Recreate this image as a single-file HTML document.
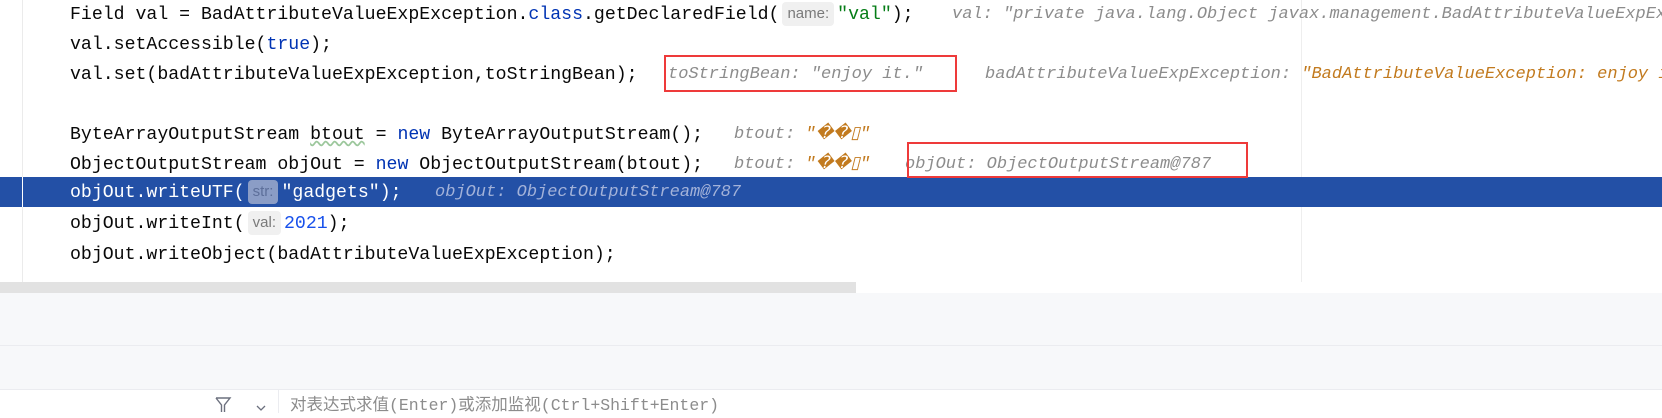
<!DOCTYPE html>
<html><head><meta charset="utf-8"><style>
*{margin:0;padding:0;box-sizing:border-box}
body{width:1662px;height:413px;overflow:hidden;background:#fff;position:relative;font-family:"Liberation Mono",monospace;font-size:18.2px;color:#080808}
.l{position:absolute;left:0;height:30px;line-height:30px;white-space:pre;width:1662px;overflow:hidden}
.c{position:absolute;left:70px;top:1px}
.k{color:#0033b3}.s{color:#067d17}.n{color:#1750eb}
.h{position:absolute;top:1px;font-style:italic;color:#8c8c8c;font-size:17px}
.o{color:#c27a1e}
.p{display:inline-block;background:#f0f0f0;color:#7a7a7a;font-family:"Liberation Sans",sans-serif;font-size:15px;line-height:24px;height:24px;padding:0 5px;border-radius:4px;margin:0 3px;vertical-align:1px}
.sel{background:#2350a6;color:#fff}
.sel .p{background:#8b9dc6;color:#5d6f9a}
.sel .h{color:#a3b2d9}
.box{position:absolute;border:2px solid #ee3a3a}
</style></head><body>
<div style="position:absolute;left:22px;top:0;width:1px;height:282px;background:#ebebeb"></div>
<div style="position:absolute;left:1301px;top:0;width:1px;height:282px;background:#eeeeee"></div>

<div class="l" style="top:-1px"><span class="c">Field val = BadAttributeValueExpException.<span class="k">class</span>.getDeclaredField(<span class="p">name:</span><span class="s">"val"</span>);</span><span class="h" style="left:952px">val: "private java.lang.Object javax.management.BadAttributeValueExpException.val"</span></div>
<div class="l" style="top:29px"><span class="c">val.setAccessible(<span class="k">true</span>);</span></div>
<div class="l" style="top:59px"><span class="c">val.set(badAttributeValueExpException,toStringBean);</span><span class="h" style="left:668px">toStringBean: "enjoy it."</span><span class="h" style="left:985px">badAttributeValueExpException: <span class="o">"BadAttributeValueException: enjoy it."</span></span></div>
<div class="l" style="top:119px"><span class="c">ByteArrayOutputStream <span style="text-decoration:underline wavy #9cc79c">btout</span> = <span class="k">new</span> ByteArrayOutputStream();</span><span class="h" style="left:734px">btout: <span class="o">"��&#9647;"</span></span></div>
<div class="l" style="top:149px"><span class="c">ObjectOutputStream objOut = <span class="k">new</span> ObjectOutputStream(btout);</span><span class="h" style="left:734px">btout: <span class="o">"��&#9647;"</span></span><span class="h" style="left:905px">objOut: ObjectOutputStream@787</span></div>
<div class="l sel" style="top:177px"><span class="c">objOut.writeUTF(<span class="p">str:</span>"gadgets");</span><span class="h" style="left:435px">objOut: ObjectOutputStream@787</span></div>
<div style="position:absolute;left:22px;top:177px;width:1px;height:30px;background:#fff"></div>
<div class="l" style="top:208px"><span class="c">objOut.writeInt(<span class="p">val:</span><span class="n">2021</span>);</span></div>
<div class="l" style="top:239px"><span class="c">objOut.writeObject(badAttributeValueExpException);</span></div>

<div class="box" style="left:664px;top:55px;width:293px;height:37px"></div>
<div class="box" style="left:907px;top:142px;width:341px;height:36px"></div>

<div style="position:absolute;left:0;top:282px;width:856px;height:11px;background:#e2e2e2"></div>
<div style="position:absolute;left:0;top:293px;width:1662px;height:96px;background:#f7f8fa"></div>
<div style="position:absolute;left:0;top:345px;width:1662px;height:1px;background:#ebecf0"></div>
<div style="position:absolute;left:0;top:389px;width:1662px;height:1px;background:#ebecf0"></div>
<svg style="position:absolute;left:214px;top:397px" width="18" height="16" viewBox="0 0 18 16"><path d="M2 1H16L10.5 8V15M2 1L7.5 8V15" fill="none" stroke="#6c707e" stroke-width="1.4"/></svg>
<svg style="position:absolute;left:255px;top:404px" width="12" height="8" viewBox="0 0 12 8"><path d="M2 2L6 6L10 2" fill="none" stroke="#6c707e" stroke-width="1.3"/></svg>
<div style="position:absolute;left:278px;top:389px;width:1px;height:24px;background:#ebecf0"></div>
<div style="position:absolute;left:290px;top:394px;font-size:16.5px;color:#8c8c8c;font-family:'Liberation Mono','Noto Sans CJK SC',monospace;line-height:24px;white-space:pre">对表达式求值(Enter)或添加监视(Ctrl+Shift+Enter)</div>
</body></html>
